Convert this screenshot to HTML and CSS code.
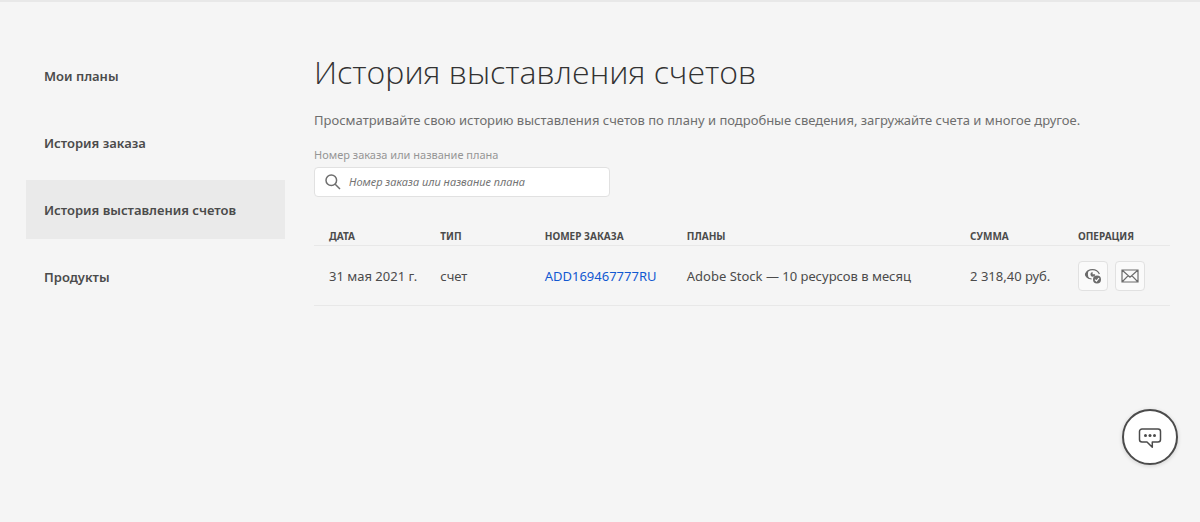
FILE: index.html
```html
<!DOCTYPE html>
<html lang="ru">
<head>
<meta charset="utf-8">
<meta name="viewport" content="width=device-width, initial-scale=1">
<title>История выставления счетов</title>
<link rel="stylesheet" href="styles.css">
</head>
<body>
<div class="page">
  <nav class="sidebar">
    <a class="nav-item" href="#">Мои планы</a>
    <a class="nav-item" href="#">История заказа</a>
    <a class="nav-item nav-item-active" href="#" aria-current="page">История выставления счетов</a>
    <a class="nav-item" href="#">Продукты</a>
  </nav>
  <main class="content">
    <h1 class="title">История выставления счетов</h1>
    <p class="lead">Просматривайте свою историю выставления счетов по плану и подробные сведения, загружайте счета и многое другое.</p>
    <label class="search-label" for="search">Номер заказа или название плана</label>
    <div class="search-box">
      <svg class="search-icon" viewBox="0 0 16 16" aria-hidden="true"><circle cx="6.3" cy="6.3" r="5.3"/><path d="M10.2 10.2 15 15"/></svg>
      <input class="search-input" id="search" type="text" placeholder="Номер заказа или название плана">
    </div>
    <table class="invoices">
      <thead>
        <tr>
          <th class="col-date">Дата</th>
          <th class="col-type">Тип</th>
          <th class="col-order">Номер заказа</th>
          <th class="col-plan">Планы</th>
          <th class="col-sum">Сумма</th>
          <th class="col-action">Операция</th>
        </tr>
      </thead>
      <tbody>
        <tr>
          <td>31 мая 2021 г.</td>
          <td>счет</td>
          <td><a class="order-link" href="#">ADD169467777RU</a></td>
          <td>Adobe Stock — 10 ресурсов в месяц</td>
          <td>2 318,40 руб.</td>
          <td>
            <div class="actions">
              <button class="action" type="button" aria-label="Просмотреть счет">
                <svg class="icon-view" viewBox="0 0 18 18" aria-hidden="true">
                  <path class="line" d="M7.600 12C4.600 11.600 2 9.400 1.500 7.400 2.700 4.400 5.200 2.600 8.500 2.600s5.700 1.700 6.900 4.500"/>
                  <path class="fill" d="M1 7.400C1.700 5.200 3.200 3.600 5 2.800 3.500 5.400 3.500 9 5.200 11.700 3.200 11 1.500 9.300 1 7.400Z"/>
                  <path class="fill" d="M8.600 5v2.200h2.600a2.400 2.400 0 1 1-2.600-2.200Z"/>
                  <circle class="fill" cx="13" cy="12.600" r="4"/>
                  <path class="tick" d="m11 12.600 1.500 1.600 2.500-3.200"/>
                </svg>
              </button>
              <button class="action" type="button" aria-label="Отправить по почте">
                <svg class="icon-mail" viewBox="0 0 18 14" aria-hidden="true"><path d="M1 1h16v12H1ZM1 1l8 7.200L17 1M1 13l6.200-6.400M17 13l-6.200-6.400"/></svg>
              </button>
            </div>
          </td>
        </tr>
      </tbody>
    </table>
  </main>
</div>
<button class="chat" type="button" aria-label="Чат">
  <svg class="icon-chat" viewBox="0 0 24 24" aria-hidden="true">
    <path d="M4 4h16a2.500 2.500 0 0 1 2.500 2.500v8a2.500 2.500 0 0 1-2.500 2.500h-5.700v5.300L9 17H4a2.500 2.500 0 0 1-2.500-2.500v-8A2.500 2.500 0 0 1 4 4Z"/>
    <circle cx="7.500" cy="10.500" r="1.500"/><circle cx="12" cy="10.500" r="1.500"/><circle cx="16.500" cy="10.500" r="1.500"/>
  </svg>
</button>
</body>
</html>
```
FILE: styles.css
```css
* { box-sizing: border-box; }

body {
  margin: 0;
  min-height: 100vh;
  border-top: 2px solid #e8e8e8;
  background: #f5f5f5;
  color: #4b4b4b;
  font-family: "Noto Sans", "Open Sans", sans-serif;
  font-size: 13px;
  line-height: 20px;
}

.page {
  display: grid;
  grid-template-columns: 259px 1fr;
  column-gap: 29px;
  padding: 44px 30px 0 26px;
}

.sidebar {
  display: flex;
  flex-direction: column;
  gap: 8px;
}

.nav-item {
  display: flex;
  align-items: center;
  height: 59px;
  padding: 0 18px;
  color: #4b4b4b;
  font-weight: 600;
  text-decoration: none;
}

.nav-item-active { background: #eaeaea; }

.content { min-width: 0; }

.title {
  margin: 0;
  color: #323232;
  font-family: "Open Sans", "Noto Sans", sans-serif;
  font-size: 32px;
  font-weight: 300;
  line-height: 52px;
}

.lead {
  margin: 12px 0 17px;
  color: #6e6e6e;
}

.search-label {
  display: block;
  margin-bottom: 4px;
  color: #959595;
  font-size: 11px;
  line-height: 16px;
}

.search-box {
  display: flex;
  align-items: center;
  gap: 8px;
  width: 296px;
  height: 30px;
  padding: 0 10px;
  border: 1px solid #e1e1e1;
  border-radius: 4px;
  background: #fff;
}

.search-icon {
  flex: none;
  width: 16px;
  height: 16px;
  fill: none;
  stroke: #6e6e6e;
  stroke-width: 1.5;
}

.search-input {
  flex: 1;
  min-width: 0;
  padding: 0;
  border: 0;
  outline: 0;
  background: none;
  color: #4b4b4b;
  font: italic 11px/20px "Noto Sans", "Open Sans", sans-serif;
}

.search-input::placeholder { color: #747474; opacity: 1; }

.invoices {
  width: 100%;
  margin-top: 29px;
  border-collapse: collapse;
  table-layout: fixed;
}

.invoices th,
.invoices td {
  padding: 2px 0 0 15px;
  border-bottom: 1px solid #e8e8e8;
  text-align: left;
  white-space: nowrap;
}

.invoices th {
  height: 19px;
  font-size: 10px;
  line-height: 16px;
  font-weight: 700;
  text-transform: uppercase;
}

.invoices td { height: 60px; }

.col-date { width: 13%; }
.col-type { width: 12.2%; }
.col-order { width: 16.6%; }
.col-plan { width: 33.1%; }
.col-sum { width: 12.6%; }

.order-link { color: #1158d1; text-decoration: none; }

.actions { display: flex; gap: 7px; }

.action {
  display: grid;
  place-items: center;
  width: 30px;
  height: 30px;
  padding: 0;
  border: 1px solid #e1e1e1;
  border-radius: 4px;
  background: #fafafa;
}

.icon-view { width: 18px; height: 18px; }
.icon-view .line { fill: none; stroke: #6b6b6b; stroke-width: 1.2; }
.icon-view .fill { fill: #6b6b6b; }
.icon-view .tick { fill: none; stroke: #fff; stroke-width: 1.2; }

.icon-mail {
  width: 18px;
  height: 14px;
  fill: none;
  stroke: #6b6b6b;
  stroke-width: 1.2;
}

.chat {
  position: fixed;
  right: 22px;
  bottom: 57px;
  display: grid;
  place-items: center;
  width: 56px;
  height: 56px;
  padding: 0;
  border: 2px solid #4b4b4b;
  border-radius: 50%;
  background: #fff;
  box-shadow: 0 1px 4px rgba(0, 0, 0, 0.16);
}

.icon-chat { width: 24px; height: 24px; }
.icon-chat path { fill: none; stroke: #4b4b4b; stroke-width: 1.5; stroke-linejoin: round; }
.icon-chat circle { fill: #4b4b4b; }
```
